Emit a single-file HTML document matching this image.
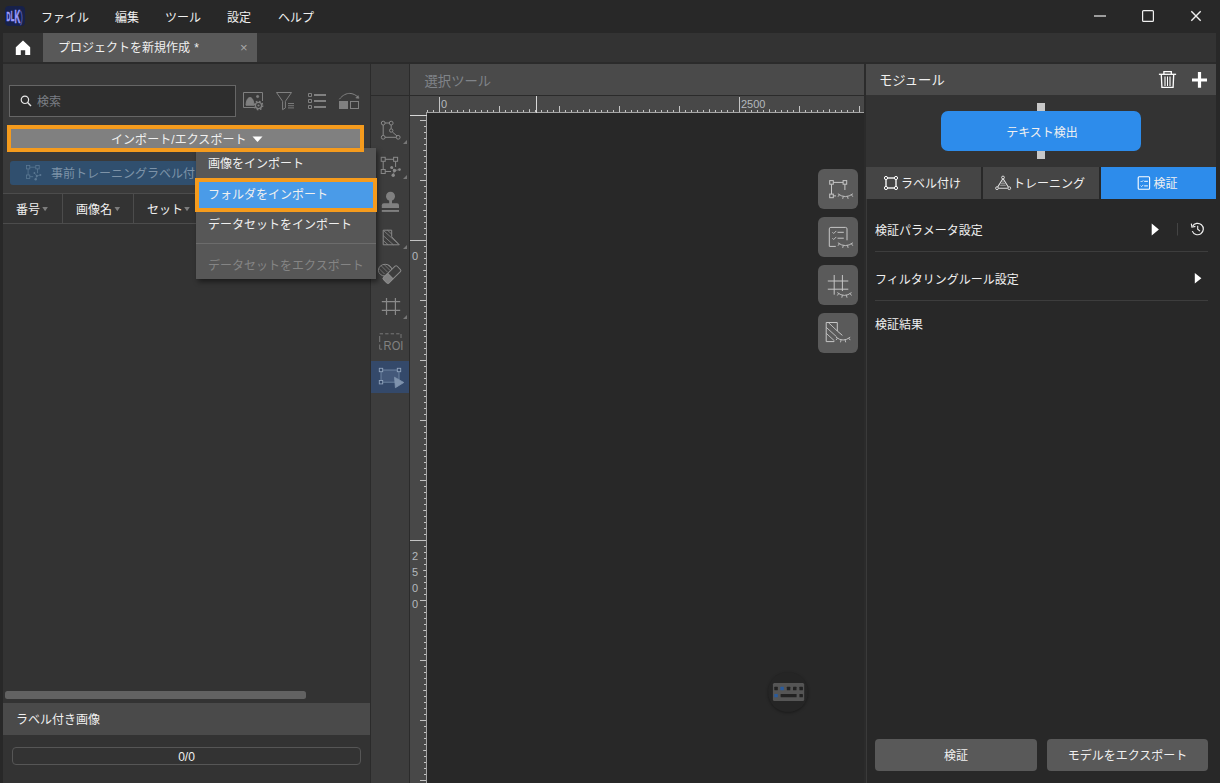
<!DOCTYPE html>
<html lang="ja">
<head>
<meta charset="utf-8">
<title>プロジェクトを新規作成</title>
<style>
*{box-sizing:border-box;margin:0;padding:0}
html,body{width:1220px;height:783px;overflow:hidden;background:#282828}
body{position:relative;font-family:"Liberation Sans","Noto Sans CJK JP",sans-serif;font-size:12px;color:#f0f0f0;line-height:1}
.a{position:absolute}
.t{position:absolute;white-space:nowrap;line-height:16px;height:16px;margin-top:1px}
svg{position:absolute;overflow:visible}
.ic{fill:none;stroke:#8a8a8a;stroke-width:1}
</style>
</head>
<body>
<!-- title bar -->
<div class="a" id="titlebar" style="left:0;top:0;width:1220px;height:33px;background:#282828"></div>
<div class="a" id="logo" style="left:5px;top:6px;width:20px;height:20px;border-radius:4px;background:#17214a"></div>
<svg id="logotxt" style="left:5px;top:6px" width="20" height="20" viewBox="5 6 20 20"><g font-family="Liberation Sans, sans-serif" font-weight="bold" fill="#9b9bff" stroke="#9b9bff" stroke-width="0.55">
<text transform="translate(6.6 20.8) scale(0.4 1)" font-size="13.6">D</text>
<text transform="translate(10.8 21.4) scale(0.4 1)" font-size="14.8">L</text>
<text transform="translate(14.4 22.7) scale(0.44 1)" font-size="18.4">K</text>
<text transform="translate(20.3 21.5) scale(0.5 1)" font-size="15.5" font-weight="normal" fill="#555ab0" stroke="#555ab0" stroke-width="0.4">)</text></g></svg>
<div class="t" style="left:41px;top:9px">ファイル</div>
<div class="t" style="left:115px;top:9px">編集</div>
<div class="t" style="left:165px;top:9px">ツール</div>
<div class="t" style="left:227px;top:9px">設定</div>
<div class="t" style="left:278px;top:9px">ヘルプ</div>
<svg style="left:1090px;top:6px" width="120" height="20" viewBox="1090 6 120 20"><path d="M1094 16h12" stroke="#d0d0d0" stroke-width="1.4" fill="none"/><rect x="1142.6" y="10.6" width="10.8" height="10.8" rx="1" fill="none" stroke="#f0f0f0" stroke-width="1.2"/><path d="M1191.3 11.3l9.4 9.4M1200.7 11.3l-9.4 9.4" stroke="#f0f0f0" stroke-width="1.4" fill="none"/></svg>

<!-- tab bar -->
<div class="a" style="left:3px;top:33px;width:1213px;height:29px;background:#333"></div>
<div class="a" style="left:3px;top:62px;width:1213px;height:2px;background:#2b2b2b"></div>
<svg style="left:15px;top:40px" width="16" height="16" viewBox="0 0 16 16"><path d="M8 0.5L0.8 7.3V15h5v-4.8h4.400V15h5V7.3z" fill="#fff"/></svg>
<div class="a" style="left:43px;top:33px;width:214px;height:29px;background:#595959"></div>
<div class="t" style="left:58px;top:39px;word-spacing:1px">プロジェクトを新規作成 *</div>
<div class="t" style="left:240px;top:39px;color:#a8a8a8;font-size:13px">×</div>

<!-- left panel -->
<div class="a" id="left" style="left:3px;top:64px;width:367px;height:719px;background:#3a3a3a"></div>
<div class="a" style="left:9px;top:85px;width:227px;height:32px;background:#2e2e2e;border:1px solid #666"></div>
<svg style="left:19px;top:94px" width="14" height="14" viewBox="0 0 14 14"><circle cx="5.9" cy="5.8" r="3.7" fill="none" stroke="#e8e8e8" stroke-width="1.2"/><path d="M8.6 8.6l3.4 3.4" stroke="#e8e8e8" stroke-width="1.4" fill="none"/></svg>
<div class="t" style="left:37px;top:93px;color:#7b7f85">検索</div>
<!-- icons row -->
<svg id="icons4" style="left:236px;top:80px" width="130" height="45" viewBox="236 80 130 45"><g fill="none" stroke="#808080" stroke-width="1">
<path d="M254.5 107.5H243.500V92.500H262.500V101"/>
<path d="M246 105.200c0.300-5 1.800-7.600 4-7.600s3.700 2.600 4 7.600z" fill="#808080"/>
<circle cx="257.600" cy="96.500" r="1.100" fill="#808080"/>
<circle cx="258.500" cy="105.500" r="3.100" stroke-width="1.300"/><circle cx="258.500" cy="105.500" r="4.200" stroke-width="1.400" stroke-dasharray="1.650 1.650"/><circle cx="258.500" cy="105.500" r="1.100" fill="#808080" stroke="none"/>
<path d="M276.5 92.5h15l-6.100 8.800v6.600l-2.800 1.800v-8.400z"/>
<path d="M288 103.500h6M288 105.700h6M288 107.900h6" stroke-width="0.900"/>
<path d="M308.500 93.500h3v3h-3zM308.500 99.500h3v3h-3zM308.500 105.500h3v3h-3z"/>
<path d="M314 95h12M314 101h12M314 107h12" stroke-width="2"/>
<rect x="339" y="101" width="9" height="8" fill="#808080" stroke="none"/>
<rect x="350.500" y="101.500" width="8" height="7"/>
<path d="M339.300 99.300c3.500-4.500 7.500-6 10.500-5.900s6 1.500 8.300 3.800"/>
<path d="M359 98.300l-3.200-0.300 2.300-2.400z" fill="#808080" stroke-width="0.600"/>
</g></svg>

<!-- import/export button -->
<div class="a" style="left:11px;top:129px;width:349px;height:19px;background:#808080"></div>
<div class="t" style="left:111px;top:131px;letter-spacing:0.05px">インポート/エクスポート</div>
<svg style="left:252px;top:136px" width="12" height="7" viewBox="0 0 12 7"><path d="M0.5 0.5h10L5.5 6z" fill="#fff"/></svg>

<!-- pre-training label button -->
<div class="a" style="left:10px;top:161px;width:357px;height:24px;background:#304f6e;border-radius:3px"></div>
<svg id="preicon" style="left:24px;top:163px" width="20" height="20" viewBox="24 163 20 20"><g fill="none" stroke="#5b7893" stroke-width="0.8"><rect x="26.400" y="165.500" width="3.400" height="3.400"/><rect x="35.800" y="165.500" width="3.400" height="3.400"/><rect x="26.400" y="175" width="3.400" height="3.400"/><path d="M29.800 167.200h6M28.100 168.900v6.100M37.500 168.900v4.300M29.800 176.700h3.400"/><path d="M34.400 173l2.400 2.900 3.600-0.900M36.800 175.900l-1.100 3.400" stroke-width="0.600"/><g fill="#5b7893" stroke="none"><circle cx="34.400" cy="173" r="0.900"/><circle cx="36.800" cy="175.900" r="1.100"/><circle cx="40.400" cy="175" r="1"/><circle cx="35.700" cy="179.300" r="1.200"/></g></g></svg>
<div class="t" style="left:51px;top:165px;color:#7d93a8">事前トレーニングラベル付け</div>

<!-- table header -->
<div class="a" style="left:3px;top:193px;width:367px;height:590px;background:#333"></div>
<div class="a" style="left:3px;top:193px;width:367px;height:1px;background:#4c4c4c"></div>
<div class="a" style="left:3px;top:223px;width:367px;height:1px;background:#4c4c4c"></div>
<div class="a" style="left:62px;top:194px;width:1px;height:29px;background:#4c4c4c"></div>
<div class="a" style="left:133px;top:194px;width:1px;height:29px;background:#4c4c4c"></div>
<div class="t" style="left:16px;top:201px">番号</div>
<div class="t" style="left:76px;top:201px">画像名</div>
<div class="t" style="left:147px;top:201px">セット</div>
<svg style="left:0;top:0" width="200" height="230" viewBox="0 0 200 230"><path d="M42.3 206.9h5.600l-2.800 4.400zM114.500 206.900h5.600l-2.800 4.400zM184.200 206.900h5.600l-2.800 4.400z" fill="#7c7c7c"/></svg>

<!-- bottom of left panel -->
<div class="a" style="left:5px;top:691px;width:301px;height:8px;border-radius:2.5px;background:#626262"></div>
<div class="a" style="left:3px;top:703px;width:367px;height:32px;background:#4a4a4a"></div>
<div class="t" style="left:16px;top:711px">ラベル付き画像</div>
<div class="a" style="left:3px;top:735px;width:367px;height:48px;background:#333"></div>
<div class="a" style="left:12px;top:747px;width:349px;height:18px;border:1px solid #565656;border-radius:4px;background:#333"></div>
<div class="t" style="left:12px;top:748px;width:349px;text-align:center">0/0</div>

<!-- center: toolbar column -->
<div class="a" style="left:370px;top:64px;width:496px;height:719px;background:#2b2b2b"></div>
<div class="a" style="left:371px;top:64px;width:38px;height:31px;background:#3d3d3d"></div>
<div class="a" style="left:371px;top:96px;width:38px;height:687px;background:#3d3d3d"></div>
<div class="a" style="left:410px;top:64px;width:454px;height:31px;background:#4a4a4a"></div>
<div class="t" style="left:424.5px;top:72.500px;font-size:13.33px;color:#808489">選択ツール</div>
<!-- rulers -->
<div class="a" style="left:410px;top:96px;width:454px;height:17px;background:#484848"></div>
<div class="a" style="left:410px;top:113px;width:17px;height:670px;background:#484848"></div>
<div class="a" style="left:427px;top:113px;width:437px;height:670px;background:#282828"></div>
<svg id="rulers" style="left:0;top:0" width="1220" height="783" viewBox="0 0 1220 783">
<path d="M427.5 113v-3M433.5 113v-3M439.5 113v-16M445.5 113v-3M451.5 113v-3M457.5 113v-3M463.5 113v-3M469.5 113v-3.8M475.5 113v-3M481.5 113v-3M487.5 113v-3M493.5 113v-3M499.5 113v-7M505.5 113v-3M511.5 113v-3M517.5 113v-3M523.5 113v-3M529.5 113v-3.8M535.5 113v-3M541.5 113v-3M547.5 113v-3M553.5 113v-3M559.5 113v-7M565.5 113v-3M571.5 113v-3M577.5 113v-3M583.5 113v-3M589.5 113v-3.8M595.5 113v-3M601.5 113v-3M607.5 113v-3M613.5 113v-3M619.5 113v-7M625.5 113v-3M631.5 113v-3M637.5 113v-3M643.5 113v-3M649.5 113v-3.8M655.5 113v-3M661.5 113v-3M667.5 113v-3M673.5 113v-3M679.5 113v-7M685.5 113v-3M691.5 113v-3M697.5 113v-3M703.5 113v-3M709.5 113v-3.8M715.5 113v-3M721.5 113v-3M727.5 113v-3M733.5 113v-3M739.5 113v-16M745.5 113v-3M751.5 113v-3M757.5 113v-3M763.5 113v-3M769.5 113v-3.8M775.5 113v-3M781.5 113v-3M787.5 113v-3M793.5 113v-3M799.5 113v-7M805.5 113v-3M811.5 113v-3M817.5 113v-3M823.5 113v-3M829.5 113v-3.8M835.5 113v-3M841.5 113v-3M847.5 113v-3M853.5 113v-3M859.5 113v-7" stroke="#c4c4c4" stroke-width="1" fill="none"/>
<path d="M427 120.5h-7M427 126.5h-3M427 132.5h-3M427 138.5h-3M427 144.5h-3M427 150.5h-3.8M427 156.5h-3M427 162.5h-3M427 168.5h-3M427 174.5h-3M427 180.5h-7M427 186.5h-3M427 192.5h-3M427 198.5h-3M427 204.5h-3M427 210.5h-3.8M427 216.5h-3M427 222.5h-3M427 228.5h-3M427 234.5h-3M427 240.5h-17M427 246.5h-3M427 252.5h-3M427 258.5h-3M427 264.5h-3M427 270.5h-3.8M427 276.5h-3M427 282.5h-3M427 288.5h-3M427 294.5h-3M427 300.5h-7M427 306.5h-3M427 312.5h-3M427 318.5h-3M427 324.5h-3M427 330.5h-3.8M427 336.5h-3M427 342.5h-3M427 348.5h-3M427 354.5h-3M427 360.5h-7M427 366.5h-3M427 372.5h-3M427 378.5h-3M427 384.5h-3M427 390.5h-3.8M427 396.5h-3M427 402.5h-3M427 408.5h-3M427 414.5h-3M427 420.5h-7M427 426.5h-3M427 432.5h-3M427 438.5h-3M427 444.5h-3M427 450.5h-3.8M427 456.5h-3M427 462.5h-3M427 468.5h-3M427 474.5h-3M427 480.5h-7M427 486.5h-3M427 492.5h-3M427 498.5h-3M427 504.5h-3M427 510.5h-3.8M427 516.5h-3M427 522.5h-3M427 528.5h-3M427 534.5h-3M427 540.5h-17M427 546.5h-3M427 552.5h-3M427 558.5h-3M427 564.5h-3M427 570.5h-3.8M427 576.5h-3M427 582.5h-3M427 588.5h-3M427 594.5h-3M427 600.5h-7M427 606.5h-3M427 612.5h-3M427 618.5h-3M427 624.5h-3M427 630.5h-3.8M427 636.5h-3M427 642.5h-3M427 648.5h-3M427 654.5h-3M427 660.5h-7M427 666.5h-3M427 672.5h-3M427 678.5h-3M427 684.5h-3M427 690.5h-3.8M427 696.5h-3M427 702.5h-3M427 708.5h-3M427 714.5h-3M427 720.5h-7M427 726.5h-3M427 732.5h-3M427 738.5h-3M427 744.5h-3M427 750.5h-3.8M427 756.5h-3M427 762.5h-3M427 768.5h-3M427 774.5h-3M427 780.5h-7" stroke="#c4c4c4" stroke-width="1" fill="none"/>
<path d="M426 112.5h438M426.5 113v670" stroke="#a4a4a4" stroke-width="1" fill="none"/>
<path d="M536.5 113V96M410 115.5h17" stroke="#d8d8d8" stroke-width="1" fill="none"/>
<g font-family="Liberation Sans, sans-serif" font-size="11" fill="#b4b8bd">
<text x="441" y="108">0</text><text x="741" y="108">2500</text>
<text x="412" y="260">0</text>
<text x="412" y="560">2</text><text x="412" y="576">5</text><text x="412" y="592">0</text><text x="412" y="608">0</text>
</g>
</svg>

<!-- tool icons -->
<div class="a" style="left:371px;top:361px;width:38px;height:32px;background:#34496a"></div>
<svg id="tools" style="left:366px;top:110px" width="50" height="290" viewBox="366 110 50 290"><g fill="none" stroke="#8a8a8a" stroke-width="1">
<path d="M385 123h4.500M391.200 125v3.600M392.400 132l4.600 4M396.300 137.300H385M383.200 135.300V125"/>
<circle cx="383.200" cy="123.100" r="1.900"/><circle cx="391.200" cy="123.100" r="1.900"/><circle cx="391.200" cy="130.500" r="1.700"/><circle cx="398.200" cy="137.300" r="1.900"/><circle cx="383.200" cy="137.300" r="1.900"/>
<path d="M407 140v4h-4zM407 175v4h-4zM407 245v4h-4zM407 315v4h-4z" fill="#777" stroke="none"/>
<rect x="381.200" y="157.300" width="4" height="4"/><rect x="393.600" y="157.300" width="4" height="4"/><rect x="381.200" y="169.500" width="4" height="4"/>
<path d="M385.200 159.300h8.400M383.200 161.300v8.200M395.600 161.300v5.700M385.200 171.500h5.800"/>
<path d="M391.700 167.500l2.800 3 5-0.900M394.500 170.500l-1.300 4.800" stroke-width="0.700"/>
<g fill="#8a8a8a" stroke="none"><circle cx="391.700" cy="167.500" r="1.500"/><circle cx="394.500" cy="170.500" r="1.700"/><circle cx="399.500" cy="169.600" r="1.300"/><circle cx="393.200" cy="175.300" r="1.700"/></g>
<g fill="#808080" stroke="none"><circle cx="390.500" cy="196.200" r="4.500"/><rect x="389.200" y="199" width="2.800" height="5"/><path d="M381.800 208v-2.800q0-2 2-2h13.200q2 0 2 2v2.800z"/><rect x="381.800" y="210" width="17.200" height="1.900"/></g>
<path d="M383.200 230.200h8.500v6.600l7.600 8h-16.100z"/>
<path d="M383.6 230.6l15 13.600M387.400 230.200l4.300 3.900M383.200 235.600l10.200 9.200M383.200 240.400l4.900 4.400" stroke-width="0.800"/>
<ellipse cx="385.200" cy="270.200" rx="6.800" ry="5.900"/>
<path d="M381 265.600l6.500 6.500M384 264.400l6 6M387.500 264.600l3.800 3.800M379 268.500l5.500 5.500" stroke-width="0.700"/>
<g transform="translate(392 274.5) rotate(-44)"><rect x="-9.5" y="-3.8" width="19" height="7.6" rx="1.5" fill="#3d3d3d"/><path d="M-2.3 -3.8v7.6h-5.700q-1.500 0-1.500-1.500v-4.600q0-1.500 1.500-1.500z" fill="#808080"/></g>
<path d="M386.500 298v17M395.400 298v17M381.800 301.600h18.400M381.800 310.300h18.400" stroke-width="1.200"/>
<path d="M379.700 333.800h21.500" stroke-dasharray="3.300 2.200" stroke-width="0.9" stroke="#808080"/>
<path d="M379.700 336v6M379.700 344.500v4.700h2.500M401 334v4" stroke-width="0.9" stroke="#808080"/>
<rect x="381" y="370" width="18" height="12.200" fill="#44597a" stroke="#7187a5" stroke-width="0.9"/>
<g fill="#34496a" stroke="#8fa2bb" stroke-width="0.9"><rect x="379.300" y="368.300" width="3.400" height="3.400"/><rect x="397.300" y="368.300" width="3.400" height="3.400"/><rect x="379.300" y="380.500" width="3.400" height="3.400"/></g>
<path d="M394.500 377.200l9.300 5.300-8.400 5.200z" fill="#7f93ad" stroke="#7f93ad" stroke-width="0.800" stroke-linejoin="round"/>
</g><text x="383.600" y="350" font-family="Liberation Sans, sans-serif" font-size="12.200" fill="#828282" textLength="19.800" lengthAdjust="spacingAndGlyphs">ROI</text></svg>

<!-- floating buttons -->
<div class="a" style="left:818px;top:169px;width:40px;height:40px;border-radius:6px;background:#5a5a5a"></div>
<div class="a" style="left:818px;top:217px;width:40px;height:40px;border-radius:6px;background:#5a5a5a"></div>
<div class="a" style="left:818px;top:265px;width:40px;height:40px;border-radius:6px;background:#5a5a5a"></div>
<div class="a" style="left:818px;top:313px;width:40px;height:40px;border-radius:6px;background:#5a5a5a"></div>
<svg id="floaticons" style="left:818px;top:169px" width="40" height="184" viewBox="818 169 40 184"><g fill="none" stroke="#c6c6c6" stroke-width="1">
<rect x="829.7" y="180.6" width="3.6" height="3.6"/><rect x="843.1" y="180.6" width="3.6" height="3.6"/><rect x="829.7" y="194.1" width="3.6" height="3.6"/>
<path d="M833.3 182.4h9.8M831.5 184.2v9.900M844.9 184.2v5.800M833.3 195.9h2.700"/>
<path d="M837.9 193.8Q845.4 199.4 852.9 193.8M839.4 194.8l-1.4 1.9M843.3 196.4l-0.6 2.5M847.5 196.4l0.6 2.5M851.4 194.8l1.4 1.9" stroke-width="0.9"/>
<path d="M835.8 246.4h-6.500v-17.500q0-1.500 1.500-1.500h14.700q1.500 0 1.500 1.500v11.400"/>
<path d="M832.4 232.200l1.300 1.300 2.600-2.600M832.4 238.200l1.300 1.300 2.600-2.600" stroke-width="0.9"/><path d="M837.5 232.300h6.300M837.5 238.200h6.300"/>
<path d="M837.9 242.8Q845.4 248.4 852.9 242.8M839.4 243.8l-1.4 1.9M843.3 245.4l-0.6 2.5M847.5 245.4l0.6 2.5M851.4 243.8l1.4 1.9" stroke-width="0.9"/>
<path d="M834.2 275v19.700M842.4 275v16M827.8 281h20.500M827.8 289.200h20.500"/>
<path d="M837.3 292.6Q844.4 298.2 851.5 292.6M838.7 293.6l-1.4 1.9M842.4 295.2l-0.6 2.5M846.4 295.2l0.6 2.5M850.1 293.6l1.4 1.9" stroke-width="0.9"/>
<path d="M834.2 341.6h-8v-19.100h11.100v8.500l5.100 4.400"/>
<path d="M828.3 322.5l9 8.500M826.2 327.300l10.300 9.400M826.200 333.300l8.300 7.600" stroke-width="0.9"/>
<path d="M836.0 337.2Q843.1 342.8 850.2 337.2M837.4 338.2l-1.4 1.9M841.1 339.8l-0.6 2.5M845.1 339.8l0.6 2.5M848.8 338.2l1.4 1.9" stroke-width="0.9"/>
</g></svg>

<!-- keyboard -->
<div class="a" style="left:768px;top:672px;width:40px;height:40px;border-radius:20px;background:#252525;box-shadow:0 1px 3px rgba(0,0,0,.35)"></div>
<svg id="kbd" style="left:772px;top:682px" width="34" height="20" viewBox="772 682 34 20"><rect x="772.900" y="683" width="31.300" height="18" rx="1.500" fill="#555"/>
<g fill="#222"><rect x="774.300" y="686.800" width="3.500" height="3.400" rx="0.500"/><rect x="786.800" y="686.800" width="3.500" height="3.400" rx="0.500"/><rect x="793" y="686.800" width="3.500" height="3.400" rx="0.500"/><rect x="799.400" y="686.800" width="3.500" height="3.400" rx="0.500"/><rect x="780.600" y="693.900" width="16" height="3.400" rx="0.500"/><rect x="799.400" y="693.900" width="3.500" height="3.400" rx="0.500"/></g>
<g fill="#2a5b9c"><rect x="780.400" y="686.800" width="3.500" height="3.400" rx="0.500"/><rect x="774.300" y="693.900" width="3.500" height="3.400" rx="0.500"/></g></svg>

<!-- right panel -->
<div class="a" style="left:864px;top:64px;width:2px;height:719px;background:#2b2b2b"></div>
<div class="a" style="left:866px;top:64px;width:350px;height:719px;background:#282828;border-left:1px solid #3a3a3a"></div>
<div class="a" style="left:866px;top:64px;width:350px;height:31px;background:#4a4a4a"></div>
<div class="t" style="left:879px;top:72px;font-size:13.33px">モジュール</div>
<svg id="trashplus" style="left:1155px;top:68px" width="56" height="24" viewBox="1155 68 56 24"><g fill="none" stroke="#fff">
<path d="M1158.900 74.300h17.200" stroke-width="1.300"/><path d="M1163.900 74v-2.400h7.400v2.400" stroke-width="1.300"/>
<path d="M1161.300 74.600l0.600 12.800h11.200l0.600-12.800" stroke-width="1.300"/>
<path d="M1167.500 76.500v9.500" stroke-width="1"/><path d="M1165 76.500v9.500M1170 76.500v9.500" stroke="#d0d0d0" stroke-width="1.500"/>
<path d="M1199.500 72.100v15.700M1192 80h15" stroke-width="3.200"/></g></svg>
<div class="a" style="left:866px;top:95px;width:350px;height:72px;background:#333"></div>
<div class="a" style="left:1037px;top:103px;width:8px;height:56px;background:#c8c8c8"></div>
<div class="a" style="left:941px;top:111px;width:200px;height:40px;border-radius:7px;background:#2d8ceb"></div>
<div class="t" style="left:942px;top:123.7px;width:200px;text-align:center">テキスト検出</div>
<!-- tabs -->
<div class="a" style="left:866px;top:167px;width:115px;height:32px;background:#454545"></div>
<div class="a" style="left:983px;top:167px;width:116px;height:32px;background:#454545"></div>
<div class="a" style="left:1101px;top:167px;width:115px;height:32px;background:#2d8ceb"></div>
<div class="t" style="left:901px;top:175px">ラベル付け</div>
<div class="t" style="left:1013px;top:175px">トレーニング</div>
<div class="t" style="left:1153.5px;top:175px">検証</div>
<svg id="tabicons" style="left:866px;top:167px" width="350" height="32" viewBox="866 167 350 32"><g fill="none" stroke="#fff" stroke-width="1.300">
<rect x="886" y="178" width="10" height="10"/>
<g fill="#454545" stroke-width="1"><circle cx="886" cy="178" r="1.600"/><circle cx="896" cy="178" r="1.600"/><circle cx="886" cy="188" r="1.600"/><circle cx="896" cy="188" r="1.600"/></g>
<path d="M1003 178.500l-5.600 9M1003 178.500l5.600 9M998.300 188.200h9.400" stroke-width="1.100" stroke="#e0e0e0"/>
<path d="M1000.200 185.300h5.600M1001 183.700h4M1003 181v2" stroke-width="0.700" stroke="#c0c0c0"/>
<g fill="#454545" stroke-width="0.900" stroke="#e8e8e8"><circle cx="1003" cy="177.500" r="1.400"/><circle cx="997" cy="188.200" r="1.400"/><circle cx="1009.300" cy="188.200" r="1.400"/></g>
<rect x="1138.200" y="176.800" width="11.400" height="12.400" rx="1" stroke-width="1.100"/>
<path d="M1140.600 181l1 1 1.700-1.700M1140.600 185.600l1 1 1.700-1.700" stroke-width="0.800"/><path d="M1144.200 181.300h3.700M1144.200 185.900h3.700" stroke-width="1"/>
</g></svg>
<!-- rows -->
<div class="t" style="left:875px;top:222px">検証パラメータ設定</div>
<div class="a" style="left:875px;top:251px;width:333px;height:1px;background:#3d3d3d"></div>
<div class="t" style="left:875px;top:271px">フィルタリングルール設定</div>
<div class="a" style="left:875px;top:300px;width:333px;height:1px;background:#3d3d3d"></div>
<div class="t" style="left:875px;top:316px">検証結果</div>
<svg id="rowicons" style="left:1140px;top:215px" width="76" height="80" viewBox="1140 215 76 80">
<path d="M1151.700 223.400l7.200 6.100-7.200 6.100zM1194.800 273l6.600 5.300-6.600 5.300z" fill="#fff"/>
<path d="M1177.500 223v12.500" stroke="#444" stroke-width="1" fill="none"/>
<g fill="none" stroke="#f0f0f0" stroke-width="1.200"><path d="M1192.600 226.300a5.700 5.700 0 1 1 -0.300 4.800"/><path d="M1197.700 225.800v3.400l2.300 2" stroke-width="1.100"/><path d="M1191.300 223.600l0.600 3.600 3.500-0.800" stroke-width="1.100"/></g></svg>
<!-- bottom buttons -->
<div class="a" style="left:875px;top:739px;width:162px;height:32px;border-radius:4px;background:#595959"></div>
<div class="a" style="left:1047px;top:739px;width:161px;height:32px;border-radius:4px;background:#595959"></div>
<div class="t" style="left:875px;top:747px;width:162px;text-align:center">検証</div>
<div class="t" style="left:1047px;top:747px;width:161px;text-align:center">モデルをエクスポート</div>

<!-- dropdown menu -->
<div class="a" id="menu" style="left:196px;top:148px;width:180px;height:131px;background:#575757;box-shadow:2px 3px 5px rgba(0,0,0,.45)"></div>
<div class="a" style="left:196px;top:243px;width:180px;height:1px;background:#6c6c6c"></div>
<div class="a" style="left:195px;top:178px;width:182px;height:34px;background:#4a9be8;border:4px solid #f59b1d"></div>
<div class="a" style="left:7px;top:125px;width:357px;height:27px;border:4px solid #f59b1d"></div>
<div class="t" style="left:208px;top:155px">画像をインポート</div>
<div class="t" style="left:208px;top:186px">フォルダをインポート</div>
<div class="t" style="left:208px;top:216px">データセットをインポート</div>
<div class="t" style="left:208px;top:257px;color:#858585">データセットをエクスポート</div>
</body>
</html>
